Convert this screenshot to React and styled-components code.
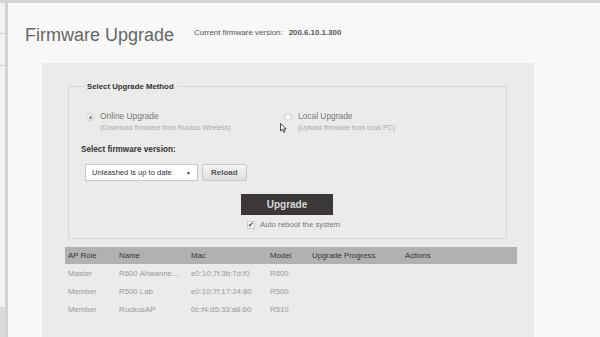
import styled, { createGlobalStyle } from 'styled-components';

const GlobalStyle = createGlobalStyle`
    html, body {
        margin: 0;
        padding: 0;
        background: #f8f8f8;
    }
    body {
        width: 600px;
        height: 337px;
        overflow: hidden;
        font-family: "Liberation Sans", Arial, sans-serif;
    }
`;

const Page = styled.div`
    display: flex;
    flex-direction: column;
    width: 600px;
    height: 337px;
`;

const TopBar = styled.div`
    height: 3px;
    background: #d4d4d4;
    flex-shrink: 0;
`;

const Body = styled.div`
    display: flex;
    flex: 1;
    min-height: 0;
`;

const Sidebar = styled.div`
    width: 5px;
    border-right: 3px solid #d2d2d2;
    background: #f1f1f1;
    display: flex;
    flex-direction: column;
`;

const SideItem = styled.div`
    height: ${(p) => p.h}px;
    border-bottom: 1px solid #cfcfcf;
`;

const SideSpacer = styled.div`
    flex: 1;
`;

const SideFoot = styled.div`
    height: 30px;
    background: #dcdcdc;
`;

const Main = styled.div`
    flex: 1;
    padding: 22px 0 0 17px;
    display: flex;
    flex-direction: column;
`;

const Header = styled.div`
    display: flex;
    align-items: baseline;
    gap: 20px;
    height: 38px;
`;

const Title = styled.h1`
    margin: 0;
    font-size: 18px;
    font-weight: normal;
    color: #666;
`;

const Version = styled.div`
    font-size: 7.9px;
    color: #555;
    position: relative;
    top: -6px;

    b {
        margin-left: 6px;
        color: #555;
    }
`;

const Panel = styled.div`
    margin-left: 17px;
    width: 492px;
    flex: 1;
    background: #ebebeb;
    padding: 19px 0 0 23px;
    box-sizing: border-box;
`;

const Fieldset = styled.fieldset`
    margin: 0 0 0 3px;
    width: 439px;
    height: 157px;
    box-sizing: border-box;
    border: 1px solid #d9d9d9;
    padding: 20px 0 0 12px;
`;

const Legend = styled.legend`
    font-size: 7.8px;
    font-weight: bold;
    color: #333;
    padding: 0 3px;
    margin-left: 3px;
`;

const Methods = styled.div`
    display: grid;
    grid-template-columns: 198px 1fr;
    padding-left: 5px;
`;

const Method = styled.div`
    display: flex;
    gap: 6px;
    position: relative;
`;

const Radio = styled.span`
    width: 6px;
    height: 6px;
    border-radius: 50%;
    border: 1px solid #cfcfcf;
    background: #f4f4f4;
    margin-top: 2px;
    flex-shrink: 0;
    display: flex;
    align-items: center;
    justify-content: center;

    &::after {
        content: '';
        width: 3px;
        height: 3px;
        border-radius: 50%;
        background: ${(p) => (p.checked ? '#888' : 'transparent')};
    }
`;

const MethodText = styled.div`
    display: flex;
    flex-direction: column;
    gap: 3px;
`;

const MethodLabel = styled.span`
    font-size: 8.4px;
    color: #777;
`;

const MethodNote = styled.span`
    font-size: 6.8px;
    color: #aaa;
`;

const Cursor = styled.svg`
    position: absolute;
    left: -4px;
    top: 12px;
`;

const SubTitle = styled.div`
    font-size: 8.2px;
    font-weight: bold;
    color: #333;
    margin: 14px 0 0 0;
`;

const Controls = styled.div`
    display: flex;
    gap: 4px;
    margin: 10px 0 0 4px;
`;

const Select = styled.div`
    width: 113px;
    height: 17px;
    box-sizing: border-box;
    border: 1px solid #c8c8c8;
    background: #fff;
    font-size: 7.6px;
    color: #333;
    display: flex;
    align-items: center;
    justify-content: space-between;
    padding: 0 6px 0 6px;

    span:last-child {
        font-size: 5px;
    }
`;

const Button = styled.div`
    height: 17px;
    box-sizing: border-box;
    border: 1px solid #c8c8c8;
    border-radius: 2px;
    background: linear-gradient(#f4f4f4, #dedede);
    font-size: 8px;
    font-weight: bold;
    color: #555;
    display: flex;
    align-items: center;
    padding: 0 8px;
`;

const Actions = styled.div`
    display: flex;
    flex-direction: column;
    align-items: center;
    width: 92px;
    margin: 13px 0 0 160px;
    gap: 5px;
`;

const Primary = styled.div`
    width: 92px;
    height: 21px;
    background: #3b3837;
    color: #d8d8d8;
    font-size: 10px;
    font-weight: bold;
    display: flex;
    align-items: center;
    justify-content: center;
`;

const Check = styled.div`
    display: flex;
    align-items: center;
    gap: 5px;
    font-size: 7.8px;
    color: #777;
    white-space: nowrap;
    margin-left: 13px;
`;

const Box = styled.span`
    width: 6px;
    height: 6px;
    border: 1px solid #ccc;
    background: #f4f4f4;
    position: relative;
    font-size: 7px;
    line-height: 6px;
    color: #444;
    text-align: center;
`;

const Table = styled.div`
    width: 452px;
    margin-top: 8px;
`;

const Row = styled.div`
    display: grid;
    grid-template-columns: 51px 72px 79px 42px 93px 1fr;
    align-items: center;
    height: ${(p) => (p.head ? 17 : 18)}px;
    padding-left: 3px;
    background: ${(p) => (p.head ? '#b1b1b1' : 'transparent')};
    color: ${(p) => (p.head ? '#333' : '#999')};
    font-size: 7.8px;
    white-space: nowrap;
`;

const aps = [
    { role: 'Master', name: 'R600 Ahwahne...', mac: 'e0:10:7f:3b:7d:f0', model: 'R600' },
    { role: 'Member', name: 'R500 Lab', mac: 'e0:10:7f:17:24:80', model: 'R500' },
    { role: 'Member', name: 'RuckusAP', mac: '0c:f4:d5:33:a8:60', model: 'R510' },
];

function App() {
    return (
        <Page>
            <GlobalStyle />
            <TopBar />
            <Body>
                <Sidebar>
                    <SideItem h={30} />
                    <SideItem h={31} />
                    <SideSpacer />
                    <SideFoot />
                </Sidebar>
                <Main>
                    <Header>
                        <Title>Firmware Upgrade</Title>
                        <Version>
                            Current firmware version:<b>200.6.10.1.300</b>
                        </Version>
                    </Header>
                    <Panel>
                        <Fieldset>
                            <Legend>Select Upgrade Method</Legend>
                            <Methods>
                                <Method>
                                    <Radio checked />
                                    <MethodText>
                                        <MethodLabel>Online Upgrade</MethodLabel>
                                        <MethodNote>(Download firmware from Ruckus Wireless)</MethodNote>
                                    </MethodText>
                                </Method>
                                <Method>
                                    <Radio />
                                    <MethodText>
                                        <MethodLabel>Local Upgrade</MethodLabel>
                                        <MethodNote>(Upload firmware from local PC)</MethodNote>
                                    </MethodText>
                                    <Cursor width="7" height="10" viewBox="0 0 7 10">
                                        <path d="M0.5 0.5 L0.5 8 L2.4 6.3 L3.7 9.3 L4.9 8.8 L3.7 5.9 L6.3 5.9 Z" fill="#fff" stroke="#222" strokeWidth="0.8" />
                                    </Cursor>
                                </Method>
                            </Methods>
                            <SubTitle>Select firmware version:</SubTitle>
                            <Controls>
                                <Select>
                                    <span>Unleashed is up to date</span>
                                    <span>▼</span>
                                </Select>
                                <Button>Reload</Button>
                            </Controls>
                            <Actions>
                                <Primary>Upgrade</Primary>
                                <Check>
                                    <Box>✔</Box>
                                    Auto reboot the system
                                </Check>
                            </Actions>
                        </Fieldset>
                        <Table>
                            <Row head>
                                <span>AP Role</span>
                                <span>Name</span>
                                <span>Mac</span>
                                <span>Model</span>
                                <span>Upgrade Progress</span>
                                <span>Actions</span>
                            </Row>
                            {aps.map((ap) => (
                                <Row key={ap.mac}>
                                    <span>{ap.role}</span>
                                    <span>{ap.name}</span>
                                    <span>{ap.mac}</span>
                                    <span>{ap.model}</span>
                                    <span></span>
                                    <span></span>
                                </Row>
                            ))}
                        </Table>
                    </Panel>
                </Main>
            </Body>
        </Page>
    );
}

export default App;
